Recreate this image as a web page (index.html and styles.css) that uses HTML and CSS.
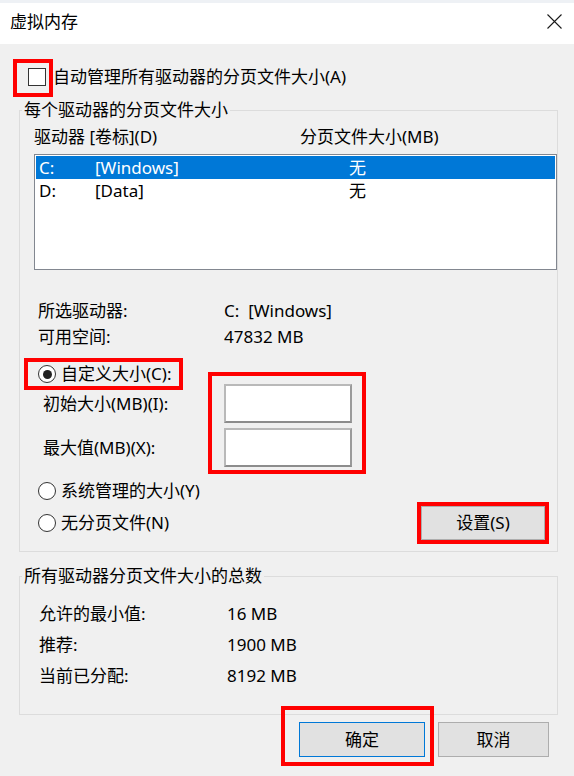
FILE: index.html
```html
<!DOCTYPE html>
<html lang="zh-CN">
<head>
  <meta charset="UTF-8">
  <title>虚拟内存</title>
  <link rel="stylesheet" href="styles.css">
</head>
<body>
  <div class="window">
    <div class="titlebar">
      <span class="title">虚拟内存</span>
      <svg class="close" width="15" height="15" viewBox="0 0 15 15">
        <path d="M0.5 0.5L14.5 14.5M14.5 0.5L0.5 14.5" stroke="#1a1a1a" stroke-width="1.1" fill="none"/>
      </svg>
    </div>
    <div class="content">
      <div class="check-row">
        <span class="checkbox mark mark-check"></span>
        <span>自动管理所有驱动器的分页文件大小(A)</span>
      </div>

      <fieldset class="group">
        <legend>每个驱动器的分页文件大小</legend>
        <div class="group-body drives">
          <div class="list-head">
            <span class="col-drive">驱动器 [卷标](D)</span>
            <span>分页文件大小(MB)</span>
          </div>
          <div class="listbox">
            <div class="list-row selected"><span class="c1">C:</span><span class="c2">[Windows]</span><span>无</span></div>
            <div class="list-row"><span class="c1">D:</span><span class="c2">[Data]</span><span>无</span></div>
          </div>
          <div class="info">
            <div class="info-row"><span class="info-label">所选驱动器:</span><span>C:&nbsp;&nbsp;[Windows]</span></div>
            <div class="info-row"><span class="info-label">可用空间:</span><span>47832 MB</span></div>
          </div>
          <div class="radio-row first mark mark-radio">
            <span class="radio checked"></span>
            <span>自定义大小(C):</span>
          </div>
          <div class="sizes">
            <div class="size-labels">
              <span>初始大小(MB)(I):</span>
              <span>最大值(MB)(X):</span>
            </div>
            <div class="size-inputs mark mark-inputs">
              <input class="field" type="text">
              <input class="field" type="text">
            </div>
          </div>
          <div class="radio-row second">
            <span class="radio"></span>
            <span>系统管理的大小(Y)</span>
          </div>
          <div class="last-row">
            <div class="radio-row">
              <span class="radio"></span>
              <span>无分页文件(N)</span>
            </div>
            <button class="btn btn-set mark mark-set">设置(S)</button>
          </div>
        </div>
      </fieldset>

      <fieldset class="group totals">
        <legend>所有驱动器分页文件大小的总数</legend>
        <div class="group-body">
          <div class="total-row"><span class="total-label">允许的最小值:</span><span>16 MB</span></div>
          <div class="total-row"><span class="total-label">推荐:</span><span>1900 MB</span></div>
          <div class="total-row"><span class="total-label">当前已分配:</span><span>8192 MB</span></div>
        </div>
      </fieldset>

      <div class="buttons">
        <button class="btn btn-ok mark mark-ok">确定</button>
        <button class="btn btn-cancel">取消</button>
      </div>
    </div>
  </div>
</body>
</html>
```

FILE: styles.css
```css
body {
  margin: 0;
  font-family: "Noto Sans", "Noto Sans CJK SC", sans-serif;
  font-size: 17px;
  line-height: 20px;
  color: #000;
}
.window {
  width: 574px;
  height: 776px;
  background: #f0f0f0;
  overflow: hidden;
}
.titlebar {
  height: 41px;
  border-top: 3px solid #eef1f5;
  background: #fff;
  display: flex;
  justify-content: space-between;
  align-items: flex-start;
  padding: 0 12px 0 10px;
}
.title { margin-top: 9px; }
.close { margin-top: 11px; }

.content { padding: 0 16px 0 19px; }

.check-row {
  display: flex;
  align-items: center;
  gap: 7px;
  height: 18px;
  margin: 24px 0 0 9px;
}
.checkbox {
  width: 18px;
  height: 18px;
  box-sizing: border-box;
  border: 1px solid #333;
  background: #fff;
}

.group {
  margin: 14px 0 0;
  padding: 0;
  border: 1px solid #dcdcdc;
  min-width: 0;
}
.group legend {
  padding: 0 2px;
  margin-left: 2px;
  line-height: 20px;
}
.drives { padding: 0 0 11px 14px; }

.list-head {
  display: flex;
  margin-top: 7px;
}
.col-drive { width: 266px; }
.listbox {
  margin-top: 7px;
  height: 116px;
  box-sizing: border-box;
  border: 1px solid #828790;
  background: #fff;
  padding: 1px;
}
.list-row {
  display: flex;
  align-items: center;
  height: 23px;
  padding-left: 3px;
}
.list-row .c1 { width: 56px; }
.list-row .c2 { width: 254px; }
.selected {
  background: #0078d7;
  color: #fff;
}

.info {
  margin-top: 28px;
  padding-left: 4px;
}
.info-row {
  display: flex;
  align-items: center;
  height: 26px;
}
.info-label { width: 186px; }

.radio-row {
  display: flex;
  width: fit-content;
  align-items: center;
  gap: 5px;
  height: 18px;
  margin-left: 4px;
}
.radio-row.first { margin-top: 15px; }
.radio-row.second { margin-top: 15px; }
.radio {
  width: 18px;
  height: 18px;
  box-sizing: border-box;
  border: 1px solid #333;
  border-radius: 50%;
  background: #fff;
  display: flex;
  align-items: center;
  justify-content: center;
}
.radio.checked::before {
  content: "";
  width: 9px;
  height: 9px;
  border-radius: 50%;
  background: #222;
}

.sizes {
  display: flex;
  margin-top: 1px;
  padding-left: 9px;
}
.size-labels {
  width: 181px;
  display: flex;
  flex-direction: column;
  gap: 5px;
}
.size-labels span {
  height: 39px;
  display: flex;
  align-items: center;
}
.size-inputs {
  display: flex;
  flex-direction: column;
  gap: 5px;
}
.field {
  width: 128px;
  height: 39px;
  box-sizing: border-box;
  margin: 0;
  border: 2px solid;
  border-color: #b9b9b9 #9a9a9a #8c8c8c #b9b9b9;
  background: #fff;
}

.last-row {
  display: flex;
  justify-content: space-between;
  align-items: center;
  height: 34px;
  margin: 6px 12px 0 0;
}
.last-row .radio-row { margin-left: 4px; }

.btn {
  font: inherit;
  color: #000;
  background: #e1e1e1;
  border: 1px solid #adadad;
  padding: 0;
  margin: 0;
}
.btn-set { width: 124px; height: 34px; }

.totals .group-body { padding: 12px 0 23px 19px; }
.total-row {
  display: flex;
  align-items: center;
  height: 31px;
}
.total-label { width: 188px; }

.buttons {
  display: flex;
  justify-content: flex-end;
  gap: 13px;
  margin: 7px 9px 0 0;
}
.btn-ok {
  width: 126px;
  height: 35px;
  border-color: #0078d7;
}
.btn-cancel { width: 111px; height: 35px; }

/* red annotation frames */
.mark { position: relative; }
.mark::after {
  content: "";
  position: absolute;
  border: 4px solid #f00;
  pointer-events: none;
}
.mark-check::after { top: -10px; left: -16px; right: -8px; bottom: -12px; }
.mark-radio::after { top: -7px; left: -14px; right: -11px; bottom: -7px; }
.mark-inputs::after { top: -12px; left: -16px; right: -14px; bottom: -7px; }
.mark-set::after { top: -5px; left: -5px; right: -5px; bottom: -5px; }
.mark-ok::after { top: -17px; left: -19px; right: -10px; bottom: -10px; }
```
